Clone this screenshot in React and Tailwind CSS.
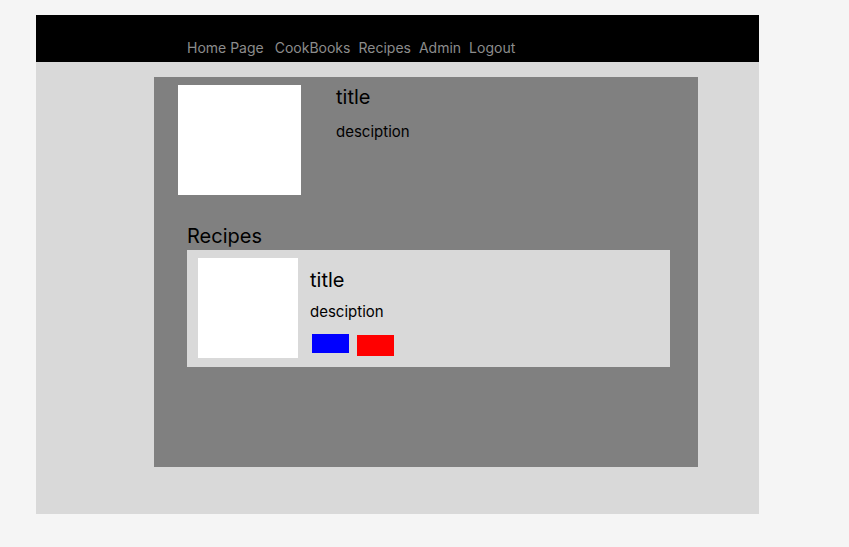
import React from 'react';

const links = ['Home Page', 'CookBooks', 'Recipes', 'Admin', 'Logout'];

const RecipeCard = () => (
    <div className="flex bg-[#d9d9d9] w-[483px] h-[117px] mt-[1px] pl-[11px] pt-[8px]">
        <div className="bg-white w-[100px] h-[100px]" />
        <div className="ml-[12px] pt-[8px]">
            <h3 className="text-[20px] leading-[28px] text-black">title</h3>
            <p className="text-[15px] leading-[20px] mt-[8px] text-black">desciption</p>
            <div className="flex items-start gap-[8px] mt-[12px] ml-[2px]">
                <button className="bg-[#0000ff] w-[37px] h-[19px]" />
                <button className="bg-[#ff0000] w-[37px] h-[21px] mt-[1px]" />
            </div>
        </div>
    </div>
);

export default function App() {
    return (
        <div className="min-h-[547px] bg-[#f5f5f5] pt-[15px] pl-[36px]" style={{ fontFamily: 'Inter, sans-serif' }}>
            <div className="w-[723px]">
                <header className="bg-black h-[47px] flex items-end pl-[151px] pb-[4px]">
                    <nav className="flex text-[14px] leading-[20px] text-[#8c8c8c]">
                        {links.map((l, i) => (
                            <a key={l} className={i === 0 ? 'mr-[11px]' : 'mr-[8px]'}>{l}</a>
                        ))}
                    </nav>
                </header>
                <main className="bg-[#d9d9d9] h-[452px] pt-[15px] pl-[118px]">
                    <section className="bg-[#808080] w-[544px] h-[390px] pt-[8px] pl-[24px]">
                        <div className="flex">
                            <div className="bg-white w-[123px] h-[110px]" />
                            <div className="ml-[35px]">
                                <h2 className="text-[20px] leading-[24px] text-black">title</h2>
                                <p className="text-[15px] leading-[20px] mt-[13px] text-black">desciption</p>
                            </div>
                        </div>
                        <div className="ml-[9px] mt-[28px]">
                            <h2 className="text-[20px] leading-[26px] text-black">Recipes</h2>
                            <RecipeCard />
                        </div>
                    </section>
                </main>
            </div>
        </div>
    );
}
